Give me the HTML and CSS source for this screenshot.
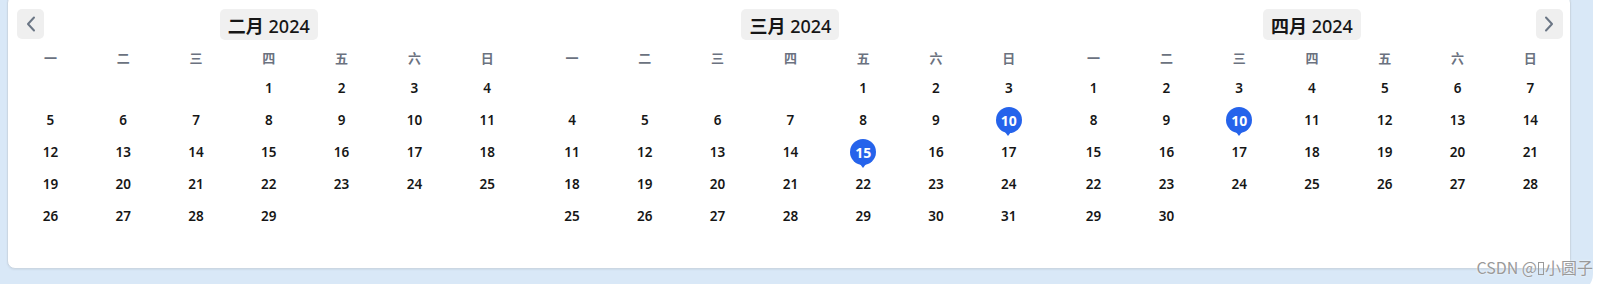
FILE: index.html
```html
<!DOCTYPE html>
<html>

<head>
    <meta charset='utf-8'>
    <title>日历</title>
    <meta name='viewport' content='width=device-width, initial-scale=1'>
    <link rel="stylesheet" href="styles.css">
</head>

<body>
    <div class="frame">
        <div class="card">
            <div id="months" class="months"></div>
        </div>
        <div class="watermark">CSDN @<span class="tofu"></span>小圆子</div>
    </div>

    <script>
        const months = [
            { name: "二月", year: 2024, offset: 3, days: 29, marked: [] },
            { name: "三月", year: 2024, offset: 4, days: 31, marked: [10, 15] },
            { name: "四月", year: 2024, offset: 0, days: 30, marked: [10] }
        ];
        const weekdays = ["一", "二", "三", "四", "五", "六", "日"];

        const prevIcon = '<svg width="10" height="16" viewBox="0 0 10 16"><polyline points="8,1.5 2,8 8,14.5" fill="none" stroke="currentColor" stroke-width="2" stroke-linecap="round" stroke-linejoin="round"/></svg>';
        const nextIcon = '<svg width="10" height="16" viewBox="0 0 10 16"><polyline points="2,1.5 8,8 2,14.5" fill="none" stroke="currentColor" stroke-width="2" stroke-linecap="round" stroke-linejoin="round"/></svg>';

        function buildMonth(month, index) {
            let html = '<div class="month"><div class="month-head">';
            if (index == 0) html += '<button class="nav prev">' + prevIcon + '</button>';
            html += '<button class="title"><b>' + month.name + '</b> ' + month.year + '</button>';
            if (index == months.length - 1) html += '<button class="nav next">' + nextIcon + '</button>';
            html += '</div><div class="weekdays">';
            weekdays.forEach(w => html += '<span>' + w + '</span>');
            html += '</div><div class="days">';
            for (let i = 0; i < 42; i++) {
                let d = i - month.offset + 1;
                if (d < 1 || d > month.days) html += '<span class="day"></span>';
                else if (month.marked.includes(d)) html += '<span class="day"><span class="pin">' + d + '</span></span>';
                else html += '<span class="day">' + d + '</span>';
            }
            return html + '</div></div>';
        }

        document.getElementById("months").innerHTML = months.map(buildMonth).join("");
    </script>
</body>

</html>
```

FILE: styles.css
```css
body {
    background: white;
    font-family: "Noto Sans", "Noto Sans CJK SC", sans-serif;
    margin: 0;
}

button {
    border: none;
    cursor: pointer;
    font-family: inherit;
}

.card {
    background: white;
    border: 1px solid #cbd7e3;
    border-radius: 8px;
    box-shadow: 0 1px 2px rgba(0, 0, 0, 0.06);
    box-sizing: border-box;
    height: 274px;
    margin-top: -5px;
    padding: 13px 3px 0 6px;
    width: 1564px;
}

.day {
    align-items: center;
    color: #161616;
    display: flex;
    font-size: 13.5px;
    font-weight: 600;
    height: 32px;
    justify-content: center;
}

.days {
    display: grid;
    grid-template-columns: repeat(7, 1fr);
}

.frame {
    background: #d9e8f7;
    border-bottom-right-radius: 18px;
    box-sizing: border-box;
    height: 292px;
    overflow: hidden;
    padding-left: 7px;
    position: relative;
    width: 1593px;
}

.month-head {
    display: flex;
    height: 31px;
    justify-content: center;
    margin-bottom: 4px;
    position: relative;
}

.months {
    display: grid;
    gap: 12px;
    grid-template-columns: repeat(3, 509.6px);
}

.nav {
    align-items: center;
    background: #efefef;
    border-radius: 5px;
    color: #6b7685;
    display: flex;
    height: 30px;
    justify-content: center;
    padding: 0;
    position: absolute;
    top: 0;
    width: 27px;
}

.nav.next {
    right: 4px;
}

.nav.prev {
    left: 3px;
}

.pin {
    align-items: center;
    background: #2563eb;
    border-radius: 50%;
    color: white;
    display: flex;
    font-size: 14px;
    font-weight: 700;
    height: 26px;
    justify-content: center;
    position: relative;
    width: 26px;
}

.pin::after {
    border-left: 3.5px solid transparent;
    border-right: 3.5px solid transparent;
    border-top: 4px solid #2563eb;
    bottom: -3px;
    content: "";
    left: 9.5px;
    position: absolute;
}

.title {
    background: #f0f0f0;
    border-radius: 5px;
    color: #161616;
    font-size: 18px;
    font-weight: 500;
    height: 31px;
    padding: 0 8px;
}

.title b {
    font-weight: 700;
}

.tofu {
    border: 1px solid #9a9a9a;
    display: inline-block;
    height: 11px;
    margin: 0 1px;
    vertical-align: -1px;
    width: 4px;
}

.watermark {
    color: #9a9a9a;
    font-family: "Noto Sans CJK SC", sans-serif;
    font-size: 16px;
    position: absolute;
    right: 0;
    text-shadow: 0 0 2px white;
    top: 255px;
}

.weekdays {
    color: #6b7280;
    display: grid;
    font-size: 13px;
    font-weight: 600;
    grid-template-columns: repeat(7, 1fr);
    height: 28px;
    line-height: 28px;
    text-align: center;
}
```
